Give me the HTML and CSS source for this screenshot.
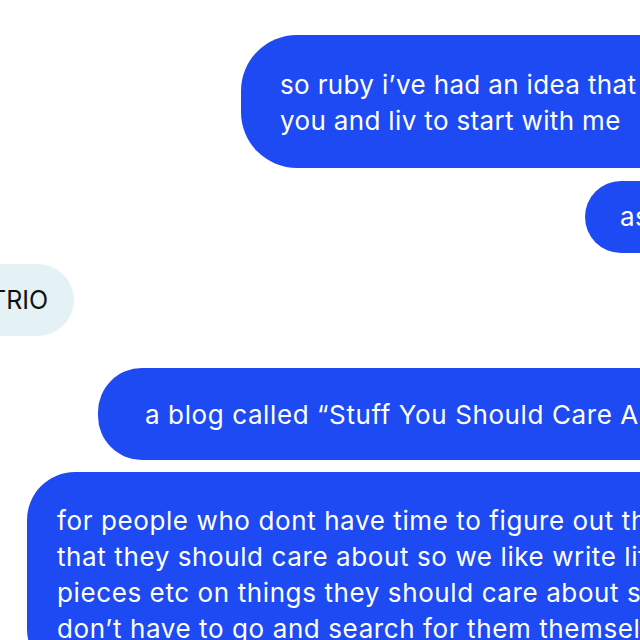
FILE: index.html
```html
<!DOCTYPE html>
<html>
<head>
<meta charset="utf-8">
<link rel="stylesheet" href="styles.css">
</head>
<body>
<div class="chat">
  <div class="bubble out b1">so ruby i’ve had an idea that i want<br>you and liv to start with me</div>
  <div class="bubble out b2">as a trio</div>
  <div class="bubble in b3">TRIO</div>
  <div class="bubble out b4">a blog called “Stuff You Should Care About”</div>
  <div class="bubble out b5">for people who dont have time to figure out the things<br>that they should care about so we like write little<br>pieces etc on things they should care about so they<br>don’t have to go and search for them themselves</div>
</div>
</body>
</html>
```
FILE: styles.css
```css
html, body {
  margin: 0;
  padding: 0;
  background: #ffffff;
  overflow: hidden;
  width: 640px;
  height: 640px;
}
.chat {
  display: flex;
  flex-direction: column;
  padding-top: 35px;
  width: 640px;
}
.bubble {
  font-family: "Inter", "Noto Sans", sans-serif;
  font-size: 26px;
  letter-spacing: 0.35px;
  line-height: 36px;
  white-space: nowrap;
  box-sizing: border-box;
}
.out {
  background: #1d4af2;
  color: #ffffff;
  width: 900px;
}
.in {
  background: #e5f2f5;
  color: #111111;
  letter-spacing: 0;
  font-size: 25px;
}
.b1 {
  margin-left: 241px;
  padding: 32px 0 29px 39px;
  border-radius: 56px;
}
.b2 {
  margin-top: 13px;
  margin-left: 585px;
  padding: 18px 0 18px 35px;
  border-radius: 36px;
}
.b3 {
  margin-top: 11px;
  align-self: flex-start;
  margin-left: -70px;
  padding: 18px 26px 18px 60px;
  border-radius: 36px;
}
.b4 {
  margin-top: 32px;
  margin-left: 98px;
  padding: 29px 0 27px 47px;
  border-radius: 44px;
  letter-spacing: 0.6px;
}
.b5 {
  margin-top: 12px;
  margin-left: 27px;
  padding: 31px 0 30px 30px;
  border-radius: 48px;
  letter-spacing: 0.6px;
}
```
